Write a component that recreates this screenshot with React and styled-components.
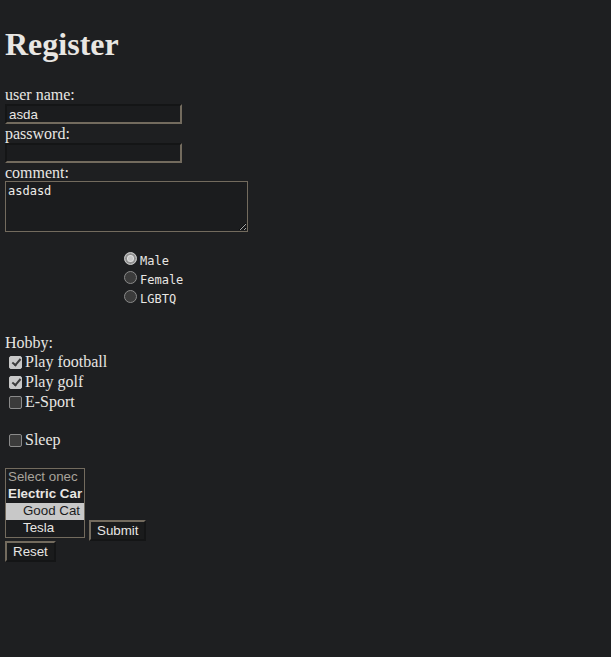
import styled, { createGlobalStyle } from "styled-components";

const GlobalStyle = createGlobalStyle`
  html, body {
    margin: 0;
    background: #1e1f21;
    color: #e8e6e3;
    font-family: "Liberation Serif", "Times New Roman", serif;
    font-size: 16px;
  }
  body {
    padding: 0 5px;
    min-height: 657px;
  }
`;

const Page = styled.div`
  display: flex;
  flex-direction: column;
  align-items: flex-start;
`;

const Title = styled.h1`
  margin: 26px 0 0;
  font-size: 32px;
  line-height: 37px;
  font-weight: bold;
`;

const Form = styled.form`
  display: flex;
  flex-direction: column;
  align-items: flex-start;
  margin-top: 22px;
`;

const Label = styled.label`
  display: block;
  line-height: 19px;
  height: 19px;
`;

const TextInput = styled.input`
  box-sizing: border-box;
  width: 177px;
  height: 20px;
  margin: 0;
  padding: 1px 2px;
  background: #1b1c1e;
  color: #e8e6e3;
  font: 13.33px "Liberation Sans", Arial, sans-serif;
  border: 2px solid;
  border-color: #141516 #736b5e #736b5e #141516;
  outline: none;
`;

const Comment = styled.textarea`
  box-sizing: border-box;
  width: 243px;
  height: 51px;
  margin: -1px 0 0;
  padding: 2px 2px;
  background: #1b1c1e;
  color: #f0eeea;
  font: 12px "DejaVu Sans Mono", "Liberation Mono", monospace;
  border: 1px solid #736b5e;
  border-radius: 0;
  resize: vertical;
`;

const RadioGroup = styled.div`
  display: flex;
  flex-direction: column;
  margin: 17px 0 0 119px;
`;

const RadioRow = styled.label`
  display: flex;
  align-items: center;
  height: 19px;
  font: 12px "DejaVu Sans Mono", "Liberation Mono", monospace;
  color: #e8e6e3;
`;

const RadioText = styled.span`
  padding-top: 4px;
  line-height: 14px;
`;

const Radio = styled.input.attrs({ type: "radio" })`
  appearance: none;
  box-sizing: border-box;
  width: 13px;
  height: 13px;
  margin: 0 3px 0 0;
  border-radius: 50%;
  border: 1px solid #8a8a8a;
  background: #3b3b3b;

  &:checked {
    background: #c6c6c6;
    border: 1px solid #c6c6c6;
    box-shadow: inset 0 0 0 2px #8f8f8f, inset 0 0 0 3px #e0e0e0;
  }
`;

const Hobby = styled.div`
  margin-top: 27px;
  line-height: 19px;
`;

const CheckRow = styled.label`
  display: flex;
  align-items: center;
  height: 20px;
  padding-left: 4px;
  margin-top: ${(p) => (p.$gap ? "18px" : "0")};
`;

const Check = styled.input.attrs({ type: "checkbox" })`
  appearance: none;
  position: relative;
  box-sizing: border-box;
  width: 13px;
  height: 13px;
  margin: 0 3px 0 0;
  border: 1px solid #8a8a8a;
  border-radius: 2px;
  background: #3b3b3b;

  &:checked {
    background: #c8c8c8;
    border-color: #c8c8c8;
  }

  &:checked::after {
    content: "";
    position: absolute;
    left: 3.5px;
    top: 0.5px;
    width: 3px;
    height: 7px;
    border: solid #3b3b3b;
    border-width: 0 2px 2px 0;
    transform: rotate(40deg);
  }
`;

const SelectRow = styled.div`
  display: flex;
  align-items: flex-end;
  gap: 4px;
  margin-top: 18px;
`;

const CarList = styled.select`
  box-sizing: border-box;
  width: 80px;
  height: 70px;
  margin: 0 0 3px;
  padding: 0;
  overflow: hidden;
  background: #1b1c1e;
  color: #e8e6e3;
  font: 13.33px "Liberation Sans", Arial, sans-serif;
  border: 1px solid #736b5e;
  border-radius: 0;
  outline: none;

  option {
    padding: 0 2px;
    line-height: 17px;
    height: 17px;
  }

  option:disabled {
    color: #a8a39b;
  }

  optgroup {
    font-weight: bold;
    color: #e8e6e3;
  }

  optgroup option {
    font-weight: normal;
    padding-left: 17px;
  }

  option:checked {
    background: #c8c8c8 linear-gradient(#c8c8c8, #c8c8c8);
    color: #1b1c1e;
  }
`;

const Button = styled.button`
  box-sizing: border-box;
  height: 21px;
  margin: 0;
  padding: 0 6px;
  background: #1a1b1c;
  color: #e8e6e3;
  font: 13.33px "Liberation Sans", Arial, sans-serif;
  border: 2px solid;
  border-color: #736b5e #141516 #141516 #736b5e;
  border-radius: 0;
`;

export default function App() {
  return (
    <Page>
      <GlobalStyle />
      <Title>Register</Title>
      <Form onSubmit={(e) => e.preventDefault()}>
        <Label htmlFor="user">user name:</Label>
        <TextInput id="user" type="text" defaultValue="asda" />
        <Label htmlFor="pass">password:</Label>
        <TextInput id="pass" type="password" />
        <Label htmlFor="comment">comment:</Label>
        <Comment id="comment" defaultValue="asdasd" />

        <RadioGroup>
          <RadioRow>
            <Radio name="gender" defaultChecked />
            <RadioText>Male</RadioText>
          </RadioRow>
          <RadioRow>
            <Radio name="gender" />
            <RadioText>Female</RadioText>
          </RadioRow>
          <RadioRow>
            <Radio name="gender" />
            <RadioText>LGBTQ</RadioText>
          </RadioRow>
        </RadioGroup>

        <Hobby>Hobby:</Hobby>
        <CheckRow>
          <Check defaultChecked />
          Play football
        </CheckRow>
        <CheckRow>
          <Check defaultChecked />
          Play golf
        </CheckRow>
        <CheckRow>
          <Check />
          E-Sport
        </CheckRow>
        <CheckRow $gap>
          <Check />
          Sleep
        </CheckRow>

        <SelectRow>
          <CarList size={4} defaultValue="goodcat">
            <option disabled value="">
              Select onec
            </option>
            <optgroup label="Electric Car">
              <option value="goodcat">Good Cat</option>
              <option value="tesla">Tesla</option>
            </optgroup>
          </CarList>
          <Button type="submit">Submit</Button>
        </SelectRow>
        <Button type="reset">Reset</Button>
      </Form>
    </Page>
  );
}
